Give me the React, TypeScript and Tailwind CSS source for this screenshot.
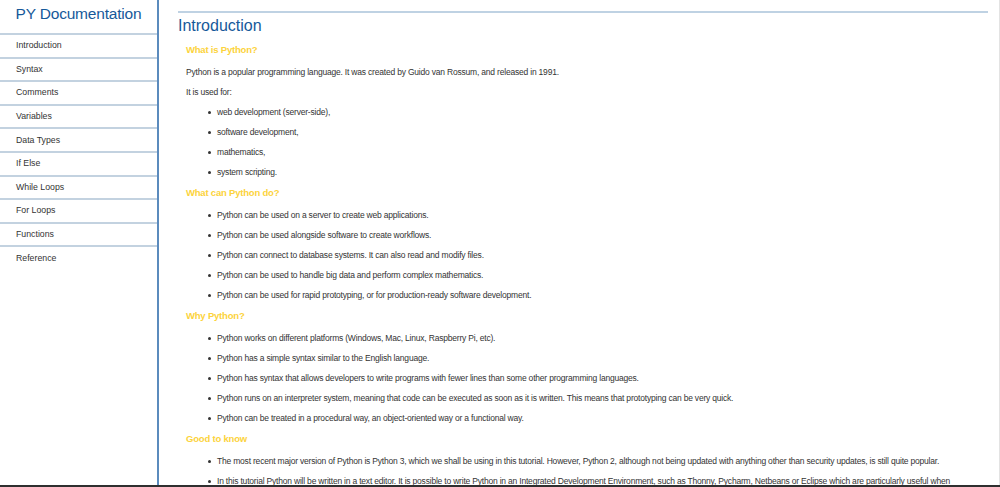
const navItems = [
  "Introduction",
  "Syntax",
  "Comments",
  "Variables",
  "Data Types",
  "If Else",
  "While Loops",
  "For Loops",
  "Functions",
  "Reference",
];

const sections = [
  {
    title: "What is Python?",
    paras: [
      "Python is a popular programming language. It was created by Guido van Rossum, and released in 1991.",
      "It is used for:",
    ],
    items: ["web development (server-side),", "software development,", "mathematics,", "system scripting."],
  },
  {
    title: "What can Python do?",
    paras: [],
    items: [
      "Python can be used on a server to create web applications.",
      "Python can be used alongside software to create workflows.",
      "Python can connect to database systems. It can also read and modify files.",
      "Python can be used to handle big data and perform complex mathematics.",
      "Python can be used for rapid prototyping, or for production-ready software development.",
    ],
  },
  {
    title: "Why Python?",
    paras: [],
    items: [
      "Python works on different platforms (Windows, Mac, Linux, Raspberry Pi, etc).",
      "Python has a simple syntax similar to the English language.",
      "Python has syntax that allows developers to write programs with fewer lines than some other programming languages.",
      "Python runs on an interpreter system, meaning that code can be executed as soon as it is written. This means that prototyping can be very quick.",
      "Python can be treated in a procedural way, an object-oriented way or a functional way.",
    ],
  },
  {
    title: "Good to know",
    paras: [],
    items: [
      "The most recent major version of Python is Python 3, which we shall be using in this tutorial. However, Python 2, although not being updated with anything other than security updates, is still quite popular.",
      "In this tutorial Python will be written in a text editor. It is possible to write Python in an Integrated Development Environment, such as Thonny, Pycharm, Netbeans or Eclipse which are particularly useful when managing larger collections of Python files.",
    ],
  },
];

export default function App() {
  return (
    <div className="h-[487px] w-[1000px] flex flex-col overflow-hidden bg-white font-['Liberation_Sans',Arial,sans-serif]">
      <div className="flex flex-1 min-h-0">
        <nav className="w-[159px] shrink-0 border-r-2 border-[#5b8bbd]">
          <header className="h-[33px] flex items-center justify-center">
            <span className="text-[15.5px] tracking-[-0.2px] text-[#16599a] pb-[5px]">PY Documentation</span>
          </header>
          <ul>
            {navItems.map((item) => (
              <li key={item} className="h-[23.6px] border-t-2 border-[#c3d2e0] pl-[16px] flex items-center text-[8.75px] text-[#333]">
                {item}
              </li>
            ))}
          </ul>
        </nav>
        <main className="flex-1 pl-[19px] pr-[11px] pt-[11px] overflow-hidden border-r border-[#e3e3e3]">
          <section className="border-t-2 border-[#bfd2e3]">
            <h1 className="h-[26px] leading-[25px] text-[16px] text-[#16599a]">Introduction</h1>
            <div className="pl-[8px] pr-[14px]">
              {sections.map((s) => (
                <div key={s.title}>
                  <h2 className="leading-[22px] mb-[1px] text-[9.5px] tracking-[-0.2px] font-bold text-[#fcd33c]">{s.title}</h2>
                  {s.paras.map((p) => (
                    <p key={p} className="leading-[20px] text-[8.5px] tracking-[-0.2px] text-[#333]">{p}</p>
                  ))}
                  <ul>
                    {s.items.map((it) => (
                      <li key={it} className="leading-[20px] text-[8.5px] tracking-[-0.2px] text-[#333] pl-[22px] flex items-start">
                        <span className="w-[3px] h-[3px] rounded-full bg-[#333] mt-[9px] mr-[6px] shrink-0" />
                        <span>{it}</span>
                      </li>
                    ))}
                  </ul>
                </div>
              ))}
            </div>
          </section>
        </main>
      </div>
      <div className="h-[2px] bg-[#2f2f2f]" />
    </div>
  );
}
